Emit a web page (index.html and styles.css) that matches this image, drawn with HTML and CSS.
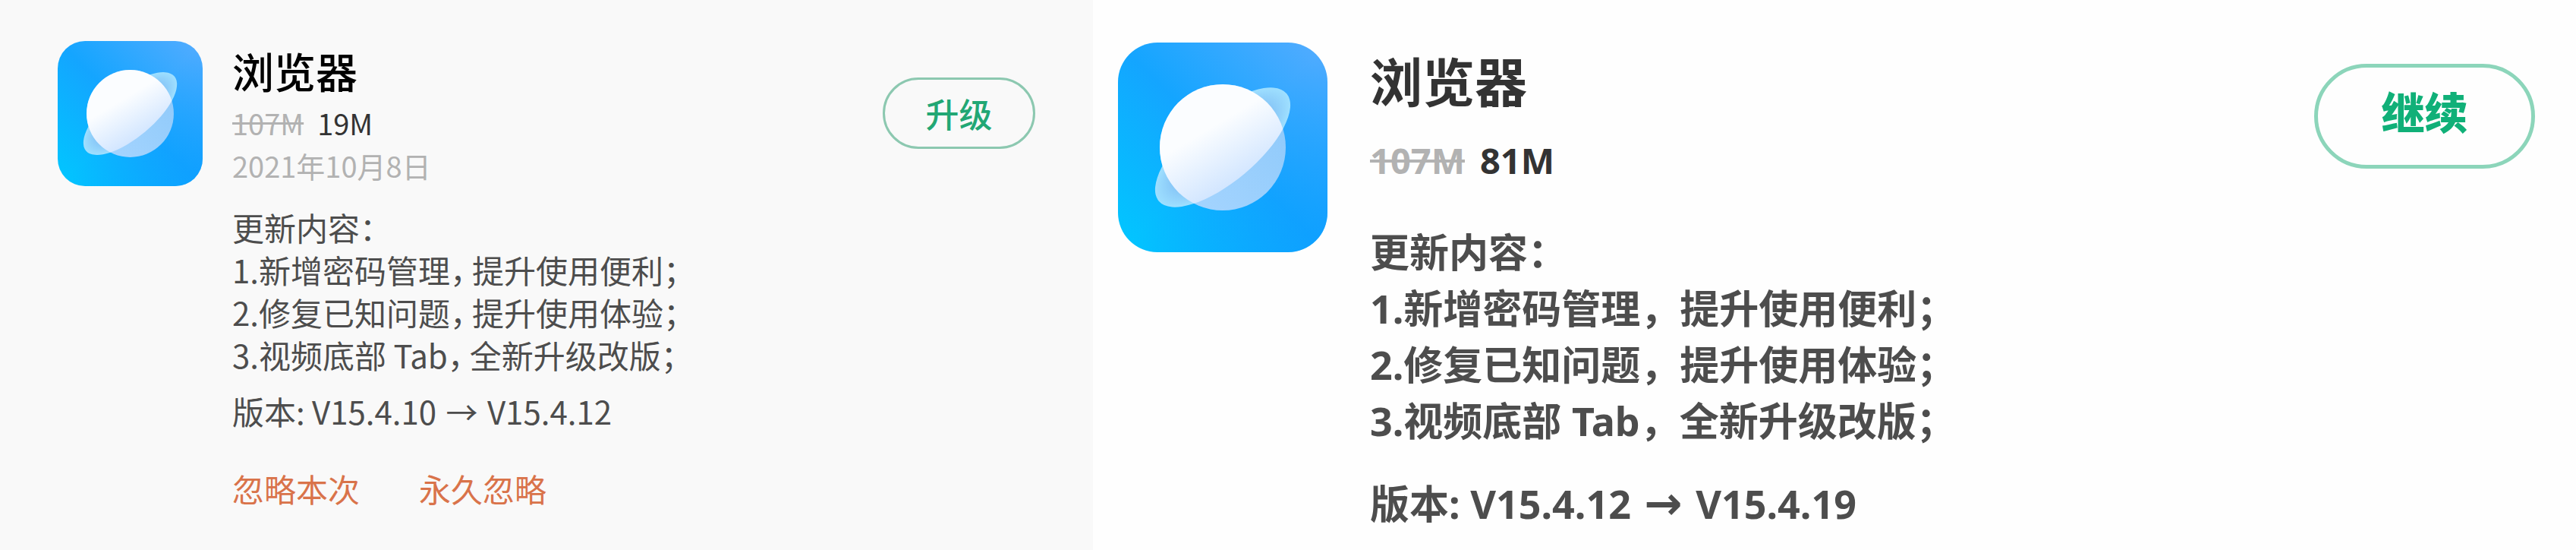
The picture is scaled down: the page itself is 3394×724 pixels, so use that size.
FILE: index.html
```html
<!DOCTYPE html>
<html lang="zh-CN">
<head>
	<meta charset="UTF-8">
	<title>应用升级</title>
	<link rel="stylesheet" href="styles.css">
</head>
<body>
	<!-- 图标的公共定义 -->
	<svg class="defs" aria-hidden="true">
		<defs>
			<linearGradient id="bg" x1="0" y1="1" x2="1" y2="0">
				<stop offset="0" stop-color="#00c8ff"/>
				<stop offset=".5" stop-color="#14a5ff"/>
				<stop offset="1" stop-color="#55acff"/>
			</linearGradient>
			<linearGradient id="shade" x1="0" y1="0" x2="1" y2="1">
				<stop offset=".5" stop-color="#0a9cff" stop-opacity="0"/>
				<stop offset="1" stop-color="#0a9cff" stop-opacity=".6"/>
			</linearGradient>
			<linearGradient id="ball" x1=".3" y1=".1" x2=".75" y2=".85">
				<stop offset=".3" stop-color="#fbfdff"/>
				<stop offset="1" stop-color="#c6dfff"/>
			</linearGradient>
			<linearGradient id="back" x1="1" y1="0" x2="0" y2="1">
				<stop offset="0" stop-color="#8cc8fa"/>
				<stop offset="1" stop-color="#a8d6ff"/>
			</linearGradient>
			<radialGradient id="ring">
				<stop offset=".7" stop-color="#84c3f6"/>
				<stop offset="1" stop-color="#9fe0ff"/>
			</radialGradient>
			<clipPath id="front">
				<path d="M28 138A110 45 0 0 0 248 138V-60H28Z" transform="rotate(-40 138 138)"/>
			</clipPath>
			<symbol id="planet" viewBox="0 0 276 276">
				<rect width="276" height="276" rx="52" fill="url(#bg)"/>
				<rect width="276" height="276" rx="52" fill="url(#shade)"/>
				<ellipse cx="138" cy="138" rx="110" ry="45" fill="url(#ring)" transform="rotate(-40 138 138)"/>
				<circle cx="138" cy="138" r="83" fill="url(#back)"/>
				<circle cx="138" cy="138" r="83" fill="url(#ball)" clip-path="url(#front)"/>
			</symbol>
		</defs>
	</svg>

	<div class="compare">
		<!-- 升级 -->
		<section class="card card-old">
			<svg class="icon" role="img" aria-label="浏览器"><use href="#planet"/></svg>
			<div class="info">
				<h2 class="name">浏览器</h2>
				<p class="size"><del>107M</del><span>19M</span></p>
				<p class="date">2021年10月8日</p>
				<div class="log">
					<p>更新内容：</p>
					<p>1.新增密码管理<span class="comma">，</span>提升使用便利；</p>
					<p>2.修复已知问题<span class="comma">，</span>提升使用体验；</p>
					<p>3.视频底部 Tab<span class="comma">，</span>全新升级改版；</p>
				</div>
				<p class="version">版本: V15.4.10 <span class="to">→</span> V15.4.12</p>
				<p class="links">
					<a href="#">忽略本次</a>
					<a href="#">永久忽略</a>
				</p>
			</div>
			<button type="button" class="btn">升级</button>
		</section>

		<!-- 继续 -->
		<section class="card card-new">
			<svg class="icon" role="img" aria-label="浏览器"><use href="#planet"/></svg>
			<div class="info">
				<h2 class="name">浏览器</h2>
				<p class="size"><del>107M</del><span>81M</span></p>
				<div class="log">
					<p>更新内容：</p>
					<p>1.新增密码管理，提升使用便利；</p>
					<p>2.修复已知问题，提升使用体验；</p>
					<p>3.视频底部 Tab，全新升级改版；</p>
				</div>
				<p class="version">版本: V15.4.12 <span class="to">→</span> V15.4.19</p>
			</div>
			<button type="button" class="btn">继续</button>
		</section>
	</div>
</body>
</html>
```
FILE: styles.css
```css
* {
	box-sizing: border-box;
	margin: 0;
	padding: 0;
}
body {
	background: #fefefe;
	color: #4d4d4d;
	font-family: "Noto Sans CJK SC", sans-serif;
}
.defs {
	position: absolute;
	width: 0;
	height: 0;
}
.compare {
	display: grid;
	grid-template-columns: 1440fr 1954fr;
	min-height: 100vh;
}
.card {
	display: flex;
	align-items: flex-start;
}
.icon {
	flex: none;
}
.info {
	flex: 1;
}
.size {
	display: flex;
}
.size del {
	color: #b2b2b2;
}
.size span {
	color: #333;
}
.btn {
	flex: none;
	background: transparent;
	font-family: inherit;
	border-style: solid;
	border-radius: 100px;
	cursor: pointer;
}

/* 左侧 */
.card-old {
	padding: 54px 76px 0;
	background: #f9f9f9;
	font-size: 42px;
	line-height: 56px;
}
.card-old .icon {
	width: 191px;
	height: 191px;
	margin-right: 39px;
}
.card-old .info {
	padding-top: 6px;
}
.card-old .name {
	margin-bottom: 10px;
	color: #000;
	font-size: 55px;
	font-weight: 500;
	line-height: 64px;
}
.card-old .size,
.card-old .date {
	font-size: 38px;
}
.card-old .size {
	gap: 18px;
}
.card-old .date {
	color: #b2b2b2;
}
.card-old .log {
	margin: 25px 0 18px;
}
/* 半宽逗号 */
.card-old .comma {
	margin-right: 8px;
	font-feature-settings: "halt";
}
.card-old .to {
	padding: 0 3px;
}
.links {
	display: flex;
	gap: 78px;
	margin-top: 46px;
}
.links a {
	color: #d9734a;
	text-decoration: none;
}
.card-old .btn {
	width: 201px;
	height: 94px;
	margin-top: 48px;
	border-width: 3px;
	border-color: #8cc8b0;
	color: #22a774;
	font-size: 44px;
	font-weight: 500;
}

/* 右侧 */
.card-new {
	padding: 56px 54px 0 33px;
	font-family: "Noto Sans", "Noto Sans CJK SC", sans-serif;
	font-size: 52px;
	font-weight: 700;
	line-height: 74px;
}
.card-new .icon {
	width: 276px;
	height: 276px;
	margin-right: 56px;
}
.card-new .info {
	padding-top: 12px;
}
.card-new .name {
	margin-bottom: 26px;
	color: #333;
	font-size: 69px;
	line-height: 80px;
}
.card-new .size {
	gap: 20px;
	font-size: 47px;
}
.card-new .log {
	margin: 47px 0 35px;
}
.card-new .to {
	padding: 0 4px;
	font-family: "DejaVu Sans", sans-serif;
	font-size: 60px;
	line-height: 1;
}
.card-new .btn {
	width: 291px;
	height: 138px;
	margin-top: 28px;
	padding-bottom: 16px;
	border-width: 5px;
	border-color: #8cd5ba;
	color: #10b078;
	font-size: 57px;
	font-weight: 900;
}
```
